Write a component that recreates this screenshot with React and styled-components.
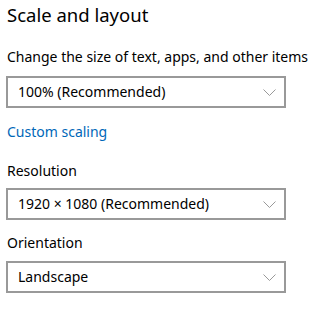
import React from "react";
import styled, { createGlobalStyle } from "styled-components";

const Global = createGlobalStyle`
  html, body { margin: 0; padding: 0; background: #fff; }
  body { font-family: "Noto Sans", "Open Sans", sans-serif; color: #000; }
`;

const Page = styled.div`
  width: 325px;
  height: 312px;
  padding: 1px 0 0 7px;
  box-sizing: border-box;
  display: flex;
  flex-direction: column;
  align-items: flex-start;
`;

const Title = styled.h2`
  margin: 0;
  font-size: 18.5px;
  line-height: 28px;
  font-weight: 400;
  white-space: nowrap;
`;

const Label = styled.div`
  font-size: 14px;
  line-height: 20px;
  white-space: nowrap;
  margin-top: ${(p) => p.$top}px;
`;

const Link = styled.a`
  font-size: 14px;
  line-height: 20px;
  color: #0067b8;
  text-decoration: none;
  margin-top: ${(p) => p.$top}px;
`;

const Select = styled.div`
  margin-top: ${(p) => p.$top}px;
  margin-left: -1px;
  width: 280px;
  height: 32px;
  box-sizing: border-box;
  border: 2px solid #999;
  display: flex;
  align-items: center;
  justify-content: space-between;
  padding: 0 8px 0 10px;
  font-size: 14px;
  line-height: 20px;
  white-space: nowrap;
`;

const Chevron = () => (
  <svg width="13" height="7" viewBox="0 0 13 7" fill="none">
    <path d="M0.5 0.5 L6.5 6.5 L12.5 0.5" stroke="#999" strokeWidth="1" />
  </svg>
);

export default function App() {
  return (
    <>
      <Global />
      <Page>
        <Title>Scale and layout</Title>
        <Label $top={18}>Change the size of text, apps, and other items</Label>
        <Select $top={9}>
          <span>100% (Recommended)</span>
          <Chevron />
        </Select>
        <Link $top={14} href="#">Custom scaling</Link>
        <Label $top={19}>Resolution</Label>
        <Select $top={7}>
          <span>1920 × 1080 (Recommended)</span>
          <Chevron />
        </Select>
        <Label $top={13}>Orientation</Label>
        <Select $top={8}>
          <span>Landscape</span>
          <Chevron />
        </Select>
      </Page>
    </>
  );
}
